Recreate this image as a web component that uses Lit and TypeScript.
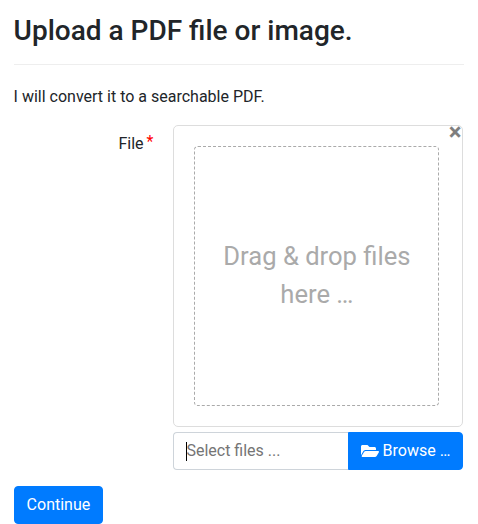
import { LitElement, html, css } from "lit";
import { customElement } from "lit/decorators.js";

@customElement("app-root")
export class AppRoot extends LitElement {
  static styles = css`
    :host {
      display: block;
      box-sizing: border-box;
      height: 524px;
      padding: 14px 14.4px 0 13.6px;
      overflow: hidden;
      background: #fff;
      color: #212529;
      font: 400 16px/24px Roboto, "Liberation Sans", sans-serif;
    }
    * {
      box-sizing: border-box;
    }
    .title {
      margin: 0;
      font-size: 28px;
      font-weight: 500;
      line-height: 34px;
    }
    .rule {
      margin: 16px 0 20px;
      border: 0;
      border-top: 1px solid #eee;
    }
    .intro {
      margin: 0 0 16px;
    }
    .row {
      display: grid;
      grid-template-columns: 139.8px 290px;
      column-gap: 20px;
    }
    .label {
      display: flex;
      justify-content: flex-end;
      gap: 3px;
      padding-top: 7px;
    }
    .required {
      color: red;
      line-height: 20px;
    }
    .preview {
      position: relative;
      height: 302px;
      margin-bottom: 5px;
      padding: 20px 23px 20px 20px;
      border: 1px solid #ddd;
      border-radius: 5px;
    }
    .close {
      position: absolute;
      top: 1px;
      right: 1px;
      padding: 0;
      border: 0;
      background: none;
      color: #000;
      font: 700 24px/10px Roboto, sans-serif;
      opacity: 0.5;
    }
    .drop {
      height: 260px;
      padding: 90px 15px;
      border: 1px dashed #aaa;
      border-radius: 4px;
      color: #aaa;
      font-size: 25.6px;
      line-height: 38.4px;
      text-align: center;
    }
    .picker {
      display: flex;
      height: 38px;
    }
    .caption {
      display: flex;
      align-items: center;
      flex: 1;
      padding-left: 12px;
      border: 1px solid #ced4da;
      border-right: 0;
      border-radius: 4px 0 0 4px;
      color: #757575;
    }
    .caret {
      width: 1px;
      height: 19px;
      margin-right: -1px;
      background: #000;
    }
    .btn {
      height: 38px;
      padding: 6px 12px;
      border: 1px solid #007bff;
      border-radius: 4px;
      background: #007bff;
      color: #fff;
      font: inherit;
    }
    .browse {
      display: flex;
      align-items: center;
      gap: 3.7px;
      border-radius: 0 4px 4px 0;
    }
    .folder {
      width: 18px;
      height: 16px;
      fill: currentColor;
    }
    .continue {
      display: block;
      margin-top: 16px;
    }
  `;

  render() {
    return html`
      <h1 class="title">Upload a PDF file or image.</h1>
      <hr class="rule" />
      <p class="intro">I will convert it to a searchable PDF.</p>
      <div class="row">
        <label class="label">File <span class="required">*</span></label>
        <div>
          <div class="preview">
            <button class="close" aria-label="Close">×</button>
            <div class="drop">Drag &amp; drop files here …</div>
          </div>
          <div class="picker">
            <div class="caption"><span class="caret"></span>Select files ...</div>
            <button class="btn browse">
              <svg class="folder" viewBox="0 0 576 512" aria-hidden="true">
                <path
                  d="M572.694 292.093L500.27 416.248A63.997 63.997 0 0 1 444.989 448H45.025c-18.523 0-30.064-20.093-20.731-36.093l72.424-124.155A64 64 0 0 1 152 256h399.964c18.523 0 30.064 20.093 20.73 36.093zM152 224h328v-48c0-26.51-21.49-48-48-48H272l-64-64H48C21.49 64 0 85.49 0 112v278.046l69.077-118.418C86.214 242.25 117.989 224 152 224z"
                />
              </svg>
              <span>Browse …</span>
            </button>
          </div>
        </div>
      </div>
      <button class="btn continue">Continue</button>
    `;
  }
}
